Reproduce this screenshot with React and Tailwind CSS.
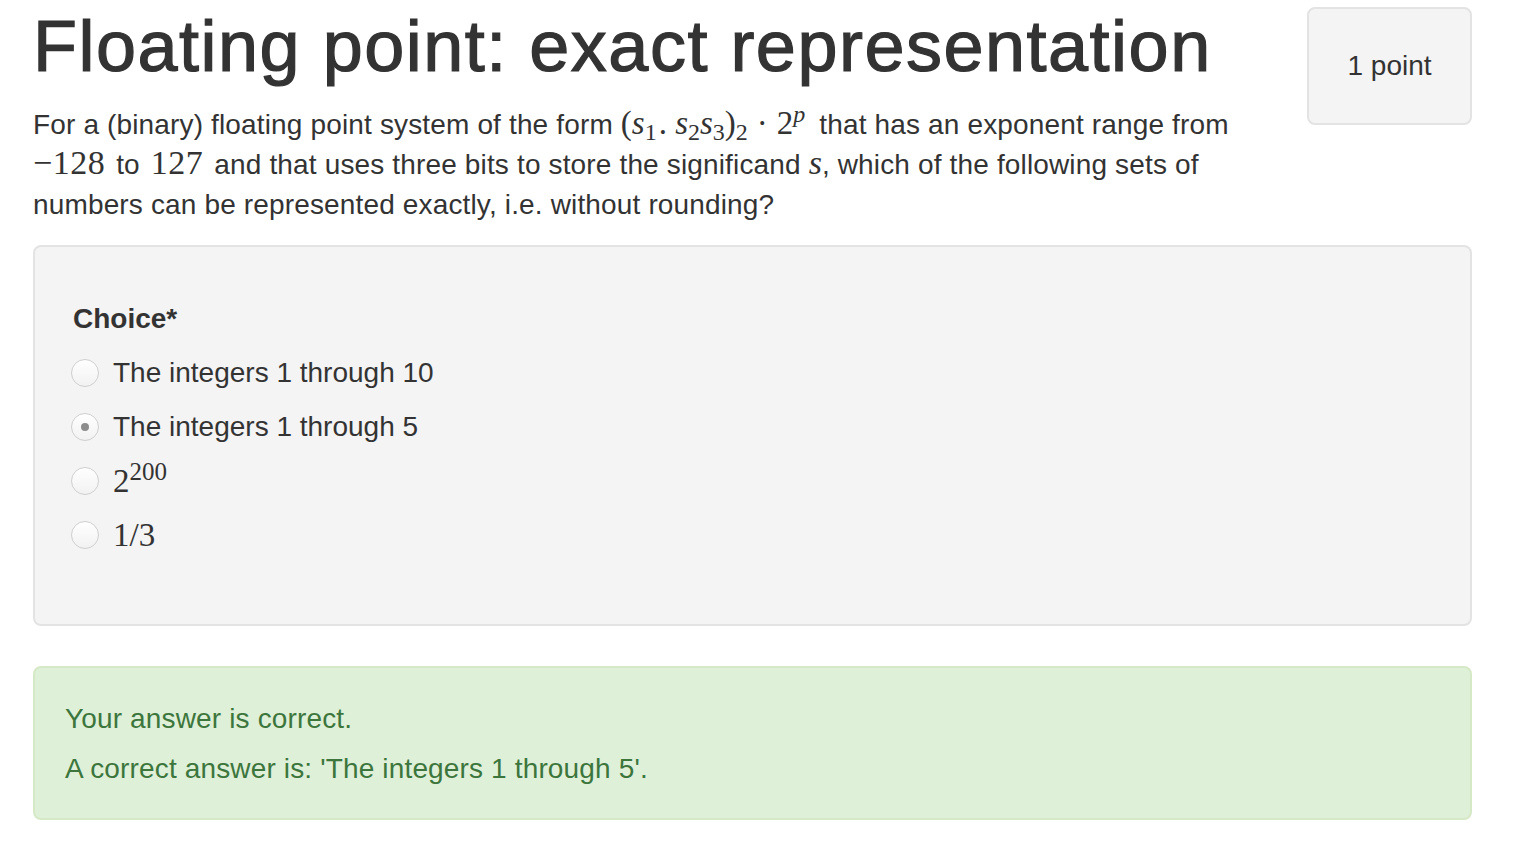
export default function App() {
  const serif = "font-['Liberation_Serif','Times_New_Roman',serif]";
  const Radio = ({ checked }) => (
    <span className="relative ml-[-2px] mr-[14px] flex h-[28px] w-[28px] shrink-0 items-center justify-center rounded-full border-[1.5px] border-[#cfcfcf] bg-gradient-to-b from-[#ffffff] to-[#f2f2f2]">
      {checked && <span className="h-[8px] w-[8px] rounded-full bg-[#8c8c8c]" />}
    </span>
  );
  return (
    <div className="min-h-screen bg-white pl-[33px] pr-[54px] font-['Liberation_Sans',Arial,sans-serif] text-[#333333]">
      <div className="flex justify-between">
        <div>
          <h1 className="mt-[7px] text-[72px] leading-[79px] tracking-[1.5px] [-webkit-text-stroke:1.2px_#333333]">
            Floating point: exact representation
          </h1>
          <p className="mt-[19px] text-[28px] leading-[40px] tracking-[0.15px]">
            For a (binary) floating point system of the form{" "}
            <span className={`${serif} text-[33px] leading-[1] tracking-normal`}>
              (<i>s</i>
              <sub className="text-[24px]">1</sub>
              <span className="ml-[2px]">.</span> <i>s</i>
              <sub className="text-[24px]">2</sub>
              <i>s</i>
              <sub className="text-[24px]">3</sub>)<sub className="text-[24px]">2</sub>
              <span className="mx-[9px]">·</span>2
              <sup className="text-[24px]">
                <i>p</i>
              </sup>
            </span>
            <span className="ml-[14px]">that has an exponent range from</span>
            <br />
            <span className={`${serif} text-[34px] leading-[1] tracking-[0.5px]`}>−128</span>
            <span className="mx-[11px]">to</span>
            <span className={`${serif} text-[34px] leading-[1] tracking-[0.5px]`}>127</span>
            <span className="ml-[11px]">and that uses three bits to store the significand </span>
            <i className={`${serif} text-[34px] leading-[1] tracking-normal`}>s</i>, which of the following sets of
            <br />
            numbers can be represented exactly, i.e. without rounding?
          </p>
        </div>
        <div className="mt-[7px] flex h-[118px] w-[165px] shrink-0 items-center justify-center rounded-[8px] border-2 border-[#e3e3e3] bg-[#f4f4f4] text-[28px]">
          1 point
        </div>
      </div>

      <div className="mt-[20px] rounded-[8px] border-2 border-[#e3e3e3] bg-[#f4f4f4] pb-[69px] pl-[38px] pt-[52px]">
        <div className="text-[28px] font-bold leading-[40px]">Choice*</div>
        <div className="mt-[14px] flex flex-col gap-[14px]">
          <label className="flex h-[40px] items-center text-[28px]">
            <Radio />
            The integers 1 through 10
          </label>
          <label className="flex h-[40px] items-center text-[28px]">
            <Radio checked />
            The integers 1 through 5
          </label>
          <label className="flex h-[40px] items-center text-[28px]">
            <Radio />
            <span className={`${serif} text-[33px] leading-[40px]`}>
              2<sup className="text-[25px]">200</sup>
            </span>
          </label>
          <label className="flex h-[40px] items-center text-[28px]">
            <Radio />
            <span className={`${serif} text-[33px] leading-[40px]`}>1/3</span>
          </label>
        </div>
      </div>

      <div className="mt-[40px] flex flex-col gap-[10px] rounded-[8px] border-2 border-[#d6e9c6] bg-[#dff0d8] pb-[29px] pl-[30px] pt-[31px] text-[28px] leading-[40px] tracking-[0.15px] text-[#3c763d]">
        <div>Your answer is correct.</div>
        <div>A correct answer is: 'The integers 1 through 5'.</div>
      </div>
    </div>
  );
}
